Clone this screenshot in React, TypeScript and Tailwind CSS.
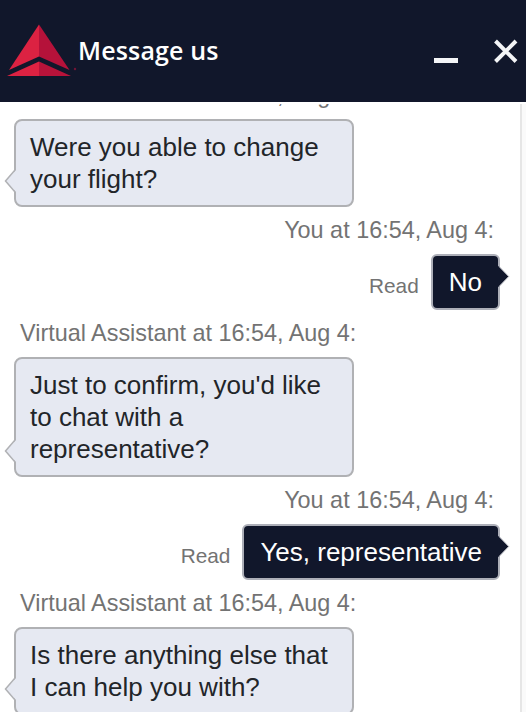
import React from "react";

type Message = { from: "agent" | "you"; lines: string[] };

const messages: Message[] = [
  { from: "agent", lines: ["Were you able to change", "your flight?"] },
  { from: "you", lines: ["No"] },
  { from: "agent", lines: ["Just to confirm, you'd like", "to chat with a", "representative?"] },
  { from: "you", lines: ["Yes, representative"] },
  { from: "agent", lines: ["Is there anything else that", "I can help you with?"] },
];

function Header() {
  return (
    <header className="flex h-[102px] shrink-0 items-start bg-[#11172b]">
      <svg className="ml-[6px] mt-[24px] shrink-0" width="72" height="54" viewBox="0 0 72 54">
        <path d="M33 0.5 L3 46 L33 32.5Z" fill="#dc2242" />
        <path d="M33 0.5 L63.5 46 L33 32.5Z" fill="#b5123a" />
        <path d="M33 37.5 L1 52 L33 52Z" fill="#dc2242" />
        <path d="M33 37.5 L65 52 L33 52Z" fill="#b8133a" />
        <circle cx="69" cy="45" r="1.2" fill="#721536" />
      </svg>
      <h1 className="mt-[32px] whitespace-nowrap font-['Open_Sans',sans-serif] text-[25px] leading-[36px] font-semibold tracking-[0.15px] text-white">
        Message us
      </h1>
      <button aria-label="Minimize" className="mt-[58px] ml-auto h-[5px] w-[24px] shrink-0 bg-[#f4f5f7]" />
      <button aria-label="Close" className="mt-[39px] mr-[8px] ml-[35px] shrink-0">
        <svg className="block" width="25" height="25" viewBox="0 0 25 25">
          <path d="M2.5 2 L23 22.5 M23 2 L2.5 22.5" stroke="#f4f5f7" strokeWidth="4" />
        </svg>
      </button>
    </header>
  );
}

function Label({ from }: { from: Message["from"] }) {
  return (
    <div
      className={
        "h-[47px] whitespace-nowrap text-[23.4px] leading-[47px] text-[#737373] " +
        (from === "you" ? "pr-[26px] text-right" : "pl-[20px]")
      }
    >
      {from === "you" ? "You" : "Virtual Assistant"} at 16:54, Aug 4:
    </div>
  );
}

function Bubble({ from, lines }: Message) {
  const text = lines.map((line) => <div key={line}>{line}</div>);
  if (from === "agent") {
    return (
      <div className="relative ml-[14px] w-[340px] rounded-[8px] border-2 border-[#b0b1b4] bg-[#e6e9f2] px-[14px] py-[10px] text-[26px] leading-[32px] whitespace-nowrap text-[#222529]">
        {text}
        <svg className="absolute bottom-[12px] -left-[12px]" width="14" height="24" viewBox="0 0 14 24">
          <path d="M12 1 L1.5 12 L12 23 L14 23 L14 1Z" fill="#e6e9f2" />
          <path d="M11 1 L1.5 12 L11 23" fill="none" stroke="#b0b1b4" strokeWidth="1.5" />
        </svg>
      </div>
    );
  }
  return (
    <div className="flex items-center justify-end pr-[20px]">
      <span className="mt-[7px] mr-[12px] text-[20.8px] leading-[32px] text-[#737373]">Read</span>
      <div className="relative rounded-[6px] border-2 border-[#adafb8] bg-[#11172b] px-[16px] py-[10px] text-[26px] leading-[32px] whitespace-nowrap text-white">
        {text}
        <svg className="absolute top-[10px] -right-[12px]" width="13" height="22" viewBox="0 0 13 22">
          <path d="M0 0 L1.5 0 L11.5 10.5 L1.5 21 L0 21Z" fill="#11172b" />
          <path d="M2 0.5 L11.7 10.5 L2 20.5" fill="none" stroke="#adafb8" strokeWidth="1" />
        </svg>
      </div>
    </div>
  );
}

export default function App() {
  return (
    <div className="flex h-[712px] w-[526px] flex-col overflow-hidden bg-white font-['Liberation_Sans',Arial,sans-serif]">
      <Header />
      <div className="h-[2px] shrink-0 bg-white" />
      <main className="flex min-h-0 flex-1">
        <div className="flex w-[520px] shrink-0 flex-col overflow-hidden">
          <div className="-mt-[32px]">
            {messages.map((message, index) => (
              <section key={index}>
                <Label from={message.from} />
                <Bubble {...message} />
              </section>
            ))}
          </div>
        </div>
        <div className="w-[6px] shrink-0 border-l-2 border-[#e6e6e6] bg-[#fafafa]" />
      </main>
    </div>
  );
}
